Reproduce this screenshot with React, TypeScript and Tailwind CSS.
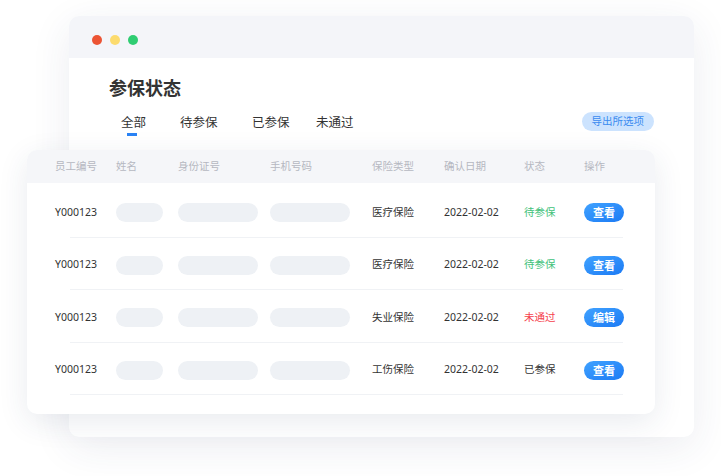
import React from "react";

const rows = [
  { type: "医疗保险", status: "待参保", statusColor: "text-[#3fc27a]", action: "查看" },
  { type: "医疗保险", status: "待参保", statusColor: "text-[#3fc27a]", action: "查看" },
  { type: "失业保险", status: "未通过", statusColor: "text-[#f5414c]", action: "编辑" },
  { type: "工伤保险", status: "已参保", statusColor: "text-[#333333]", action: "查看" },
];

const headers = ["员工编号", "姓名", "身份证号", "手机号码", "保险类型", "确认日期", "状态", "操作"];

const cols = "grid grid-cols-[61px_62px_92px_102px_72px_80px_60px_40px] items-center pl-[28px]";

export default function App() {
  return (
    <div
      className="relative w-[721px] h-[476px] bg-white overflow-hidden"
      style={{ fontFamily: '"Noto Sans", "Noto Sans CJK SC", sans-serif' }}
    >
      {/* window */}
      <div className="ml-[69px] mt-[16px] w-[625px] h-[421px] rounded-[10px] bg-white shadow-[0_10px_40px_rgba(40,60,100,0.09)] overflow-hidden">
        <div className="h-[42px] bg-[#f4f5f9] flex items-center gap-[8px] pl-[23px] pt-[5px]">
          <span className="w-[10px] h-[10px] rounded-full bg-[#ec5434]" />
          <span className="w-[10px] h-[10px] rounded-full bg-[#fcdb6e]" />
          <span className="w-[10px] h-[10px] rounded-full bg-[#2fcd72]" />
        </div>
        <div className="pl-[40px] pr-[40px]">
          <h1 className="mt-[18px] text-[18px] leading-[24px] font-bold text-[#333333]">参保状态</h1>
          <div className="mt-[14px] flex items-start">
            <div className="flex items-start pl-[12px] text-[12.5px] leading-[18px] text-[#333333]">
              <div className="w-[59px] flex flex-col">
                <span className="w-[25px] text-center">全部</span>
                <span className="mt-[1px] ml-[6px] w-[10px] h-[3px] bg-[#2a83f5]" />
              </div>
              <span className="w-[72px]">待参保</span>
              <span className="w-[64px]">已参保</span>
              <span>未通过</span>
            </div>
            <div className="ml-auto -mt-[2px] h-[19px] px-[10px] rounded-full bg-[#cce3fe] text-[#3a8bf0] text-[10.5px] leading-[19px]">
              导出所选项
            </div>
          </div>
        </div>
      </div>

      {/* table card */}
      <div className="absolute left-[27px] top-[150px] w-[628px] h-[264px] rounded-[10px] bg-white shadow-[0_8px_30px_rgba(40,60,100,0.10)] overflow-hidden">
        <div className={`${cols} h-[33px] bg-[#f5f6f9] text-[10.5px] text-[#b5b8c1]`}>
          {headers.map((h) => (
            <span key={h}>{h}</span>
          ))}
        </div>
        <div className="pt-[2px]">
          {rows.map((r, i) => (
            <div key={i}>
              <div className={`${cols} h-[51.5px] pt-[4px] text-[10.5px] text-[#333333]`}>
                <span>Y000123</span>
                <span className="w-[47px] h-[19px] rounded-full bg-[#eef1f5]" />
                <span className="w-[80px] h-[19px] rounded-full bg-[#eef1f5]" />
                <span className="w-[80px] h-[19px] rounded-full bg-[#eef1f5]" />
                <span>{r.type}</span>
                <span>2022-02-02</span>
                <span className={r.statusColor}>{r.status}</span>
                <span className="w-[40px] h-[19px] rounded-full bg-linear-to-br from-[#40a2ff] to-[#1c7af4] text-white text-[11px] font-bold leading-[19px] text-center">
                  {r.action}
                </span>
              </div>
              <div className="h-px bg-[#f0f2f5] ml-[43px] mr-[32px]" />
            </div>
          ))}
        </div>
      </div>
    </div>
  );
}
